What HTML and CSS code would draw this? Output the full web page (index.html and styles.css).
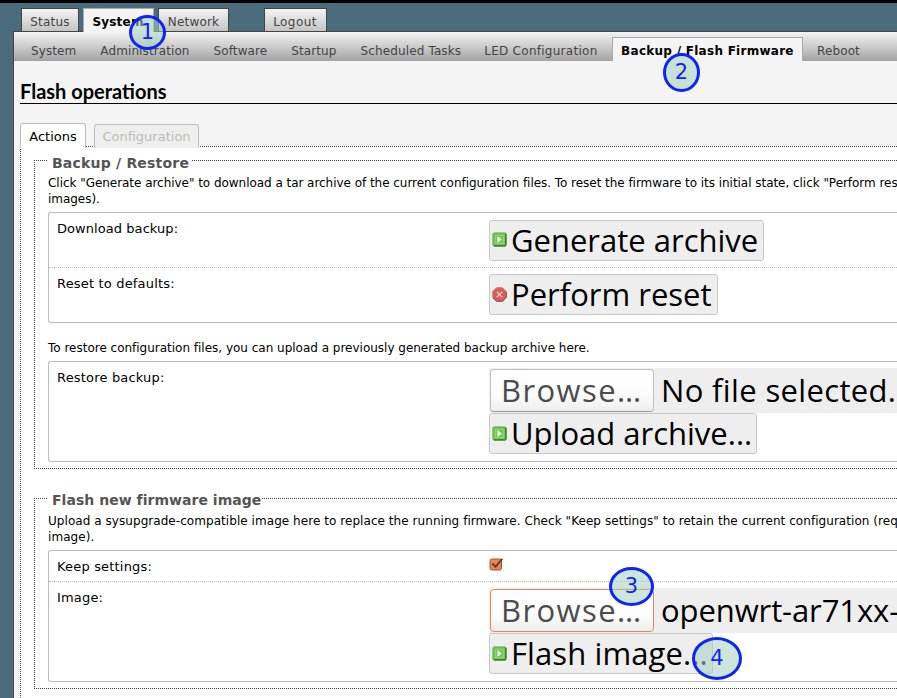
FILE: index.html
```
<!DOCTYPE html>
<html lang="en">
<head>
<meta charset="utf-8">
<title>Flash operations</title>
<link rel="stylesheet" href="styles.css">
</head>
<body>
<svg class="defs" aria-hidden="true">
  <symbol id="go" viewBox="0 0 15 15">
    <rect x=".5" y=".5" width="14" height="14" rx="2" fill="#4d9a38"/>
    <path d="M1 13V2Q1 1 2 1H13" fill="none" stroke="#9acb87"/>
    <path d="M2 14H13Q14 14 14 13V2" fill="none" stroke="#3c6c32"/>
    <rect x="2" y="2" width="11" height="11" fill="#72c952"/>
    <rect x="3.5" y="3.5" width="8" height="8" fill="none" stroke="#8bd66f"/>
    <path d="M5.5 4.3V10.7L9.7 7.5Z" fill="#fff"/>
  </symbol>
  <symbol id="stop" viewBox="0 0 15 15">
    <path d="M4.5 .8H10.5L14.2 4.5V10.5L10.5 14.2H4.5L.8 10.5V4.5Z" fill="#df5d55" stroke="#a98278"/>
    <path d="M14.2 5V10.5L10.5 14.2H4.5L1 10.8" fill="none" stroke="#8c4b3d"/>
    <path d="M4.8 4.8 10.2 10.2M10.2 4.8 4.8 10.2" stroke="#ffe3df" stroke-width="1.1"/>
  </symbol>
</svg>
<div class="page">
  <nav class="tabs">
    <a>Status</a><a class="on">System</a><a>Network</a><a class="logout">Logout</a>
  </nav>
  <nav class="sub">
    <a>System</a><a>Administration</a><a>Software</a><a>Startup</a><a>Scheduled Tasks</a><a>LED Configuration</a><a class="on">Backup / Flash Firmware</a><a>Reboot</a>
  </nav>
  <main>
    <h1>Flash operations</h1>
    <div class="cbi-tabs"><a class="on">Actions</a><a>Configuration</a></div>
    <div class="panel">
      <section class="set">
        <h2>Backup / Restore</h2>
        <p class="long">Click "Generate archive" to download a tar archive of the current configuration files. To reset the firmware to its initial state, click "Perform res<br>images).</p>
        <div class="box">
          <div class="row r1"><span class="label">Download backup:</span><button class="btn gen"><svg><use href="#go"/></svg>Generate archive</button></div>
          <div class="row r2"><span class="label">Reset to defaults:</span><button class="btn res"><svg><use href="#stop"/></svg>Perform reset</button></div>
        </div>
        <p class="restore">To restore configuration files, you can upload a previously generated backup archive here.</p>
        <div class="box">
          <div class="row r3"><span class="label">Restore backup:</span>
            <div class="col"><div class="file"><span class="browse">Browse…</span><span class="none">No file selected.</span></div>
            <button class="btn up"><svg><use href="#go"/></svg>Upload archive...</button></div>
          </div>
        </div>
      </section>
      <section class="set second">
        <h2>Flash new firmware image</h2>
        <p class="long2">Upload a sysupgrade-compatible image here to replace the running firmware. Check "Keep settings" to retain the current configuration (req<br>image).</p>
        <div class="box">
          <div class="row r4"><span class="label">Keep settings:</span>
            <svg class="check" viewBox="0 0 15 14"><rect x="1" y="2" width="11.5" height="11" rx="2" fill="#ec8355" stroke="#9c583a"/><path d="M3.5 6.5 6.5 9.8 13.3 1.8" fill="none" stroke="#6b3c28" stroke-width="2"/></svg>
          </div>
          <div class="row r5"><span class="label">Image:</span>
            <div class="col"><div class="file"><span class="browse hot">Browse…</span><span class="name">openwrt-ar71xx-</span></div>
            <button class="btn fl"><svg><use href="#go"/></svg>Flash image...</button></div>
          </div>
        </div>
      </section>
    </div>
  </main>
</div>
<span class="mark m1">1</span>
<span class="mark m2">2</span>
<span class="mark m3">3</span>
<span class="mark m4">4</span>
</body>
</html>
```
FILE: styles.css
```
* { box-sizing: border-box; }
body {
  margin: 0;
  width: 897px;
  height: 698px;
  overflow: hidden;
  position: relative;
  background: #4a6b7c;
  border-top: 3px solid #000;
  font: 12px/16px "DejaVu Sans", sans-serif;
  color: #000;
}
.defs { display: none; }
.page { padding-left: 13px; white-space: nowrap; }
.tabs { display: flex; height: 28px; padding: 5px 0 0 8px; }
.tabs a {
  height: 23px;
  width: 58px;
  margin-right: 4px;
  border: 1px solid #444;
  border-bottom: 0;
  background: linear-gradient(#f4f4f4, #c3c3c3);
  color: #444;
  text-align: center;
  line-height: 26px;
  letter-spacing: .2px;
}
.tabs a:nth-child(2) { width: 71px; padding-right: 1px; margin-right: 4px; }
.tabs a:nth-child(3) { width: 71px; }
.tabs a.logout { width: 63px; margin-left: 31px; letter-spacing: .4px; padding-right: 1px; }
.tabs a.on {
  height: 24px;
  border-color: #aaa;
  background: #f4f4f4;
  color: #000;
  font-weight: bold;
  position: relative;
}
.sub {
  display: flex;
  align-items: flex-end;
  height: 30px;
  border-top: 1px solid #444;
  border-left: 1px solid #444;
  background: linear-gradient(#f4f4f4, #a3a3a3);
  padding-left: 17px;
  letter-spacing: .1px;
}
.sub a { height: 24px; line-height: 28px; color: #444; margin-right: 24px; }
.sub a:nth-child(5) { margin-right: 23px; letter-spacing: .13px; }
.sub a:nth-child(6) { letter-spacing: .27px; margin-right: 14.6px; }
.sub a.on {
  border: 1px solid #aaa;
  border-bottom: 0;
  background: #f4f4f4;
  color: #000;
  font-weight: bold;
  width: 191px;
  padding-left: 8px;
  line-height: 26px;
  letter-spacing: .27px;
  margin-right: 14px;
}
main {
  background: #f4f4f4;
  border-left: 1px solid #444;
  padding: 18px 0 0 6px;
  height: 640px;
}
h1 {
  margin: 0;
  height: 25px;
  border-bottom: 1px solid #000;
  font: bold 20px/25px Lato, sans-serif;
}
.cbi-tabs {
  display: flex;
  align-items: flex-end;
  height: 44px;
  margin-bottom: -2px;
  position: relative;
  font-size: 13px;
}
.cbi-tabs a {
  height: 24px;
  width: 105px;
  border: 1px solid #bbb;
  border-bottom: 0;
  border-radius: 3px 3px 0 0;
  background: #eee;
  color: #bcbcb4;
  text-align: center;
  line-height: 24px;
}
.cbi-tabs a.on { width: 66px; height: 25px; margin-right: 8px; background: #fff; color: #000; line-height: 26px; }
.panel {
  border: 1px dotted #444;
  border-right: 0;
  background: #fff;
  height: 580px;
  padding: 13px 0 0 13px;
}
.set { border: 1px dotted #444; border-right: 0; height: 309px; padding-left: 13px; }
.set.second { height: 191px; margin-top: 29px; }
h2 {
  width: max-content;
  margin: -6px 0 4px;
  padding: 0 3px 0 4px;
  background: #fff;
  color: #555;
  font: bold 14px/16px "DejaVu Sans", sans-serif;
}
.set:first-child h2 { letter-spacing: .2px; }
.second h2 { margin: -7px 0 5px; padding-right: 1px; letter-spacing: .03px; }
p { margin: 0; }
.long { letter-spacing: -.04px; }
.long2 { letter-spacing: .055px; }
.restore { margin: 17px 0 5px; letter-spacing: -.01px; }
.box { border: 1px solid #bbb; border-right: 0; border-radius: 3px 0 0 3px; margin-top: 5px; }
.row { display: flex; align-items: flex-start; padding: 7px 0 0 8px; }
.row + .row { border-top: 1px dotted #bbb; }
.label { width: 432px; flex: none; font-size: 13px; line-height: 18px; letter-spacing: .18px; }
.r1 { height: 54px; }
.r1 .label { letter-spacing: .06px; }
.r2 { height: 55px; padding-top: 6px; }
.r2 .label, .r3 .label, .r5 .label { padding-top: 1px; }
.r3 { height: 99px; padding-top: 6px; }
.r4 { height: 30px; }
.r5 { height: 100px; padding-top: 6px; }
.btn {
  display: flex;
  align-items: center;
  height: 41px;
  padding: 0 0 0 2px;
  border: 1px solid #c8c8c8;
  border-radius: 3px;
  background: #eee;
  color: #000;
  font: 31px/39px "Open Sans", sans-serif;
  white-space: nowrap;
}
.btn svg { width: 15px; height: 15px; margin: 0 4px 1px 0; flex: none; }
.gen { width: 275px; }
.gen svg { margin-bottom: 3px; }
.res { width: 229px; }
.up { width: 268px; }
.fl { width: 224px; letter-spacing: .1px; }
.col { flex: 1; min-width: 0; }
.file {
  display: flex;
  height: 45px;
  padding: 1px 0 0 1px;
  background: #eee;
  font: 31px/43px "Open Sans", sans-serif;
}
.browse {
  width: 164px;
  height: 43px;
  margin-right: 7px;
  flex: none;
  border: 1px solid #c0c0c0;
  border-bottom-color: #999;
  border-radius: 4px;
  background: linear-gradient(#fff, #fcfcfc 60%, #eee);
  color: #4c4c4c;
  padding-left: 10px;
  line-height: 40px;
  letter-spacing: 1.4px;
}
.hot { border-color: #e9855c; }
.none { letter-spacing: .35px; }
.name { letter-spacing: -.1px; }
.check { width: 15px; height: 14px; margin-top: -1px; }
.mark {
  position: absolute;
  display: flex;
  align-items: center;
  justify-content: center;
  border: 3px solid #0b24fb;
  border-radius: 50%;
  background: rgba(164, 207, 190, .55);
  color: #0b24fb;
  font: 21px/1 "DejaVu Sans", sans-serif;
}
.m1 { left: 129px; top: 12px; width: 37px; height: 35px; }
.m2 { left: 663px; top: 50px; width: 37px; height: 39px; }
.m3 { left: 609px; top: 564px; width: 45px; height: 39px; }
.m4 { left: 692px; top: 634px; width: 50px; height: 43px; }
```
